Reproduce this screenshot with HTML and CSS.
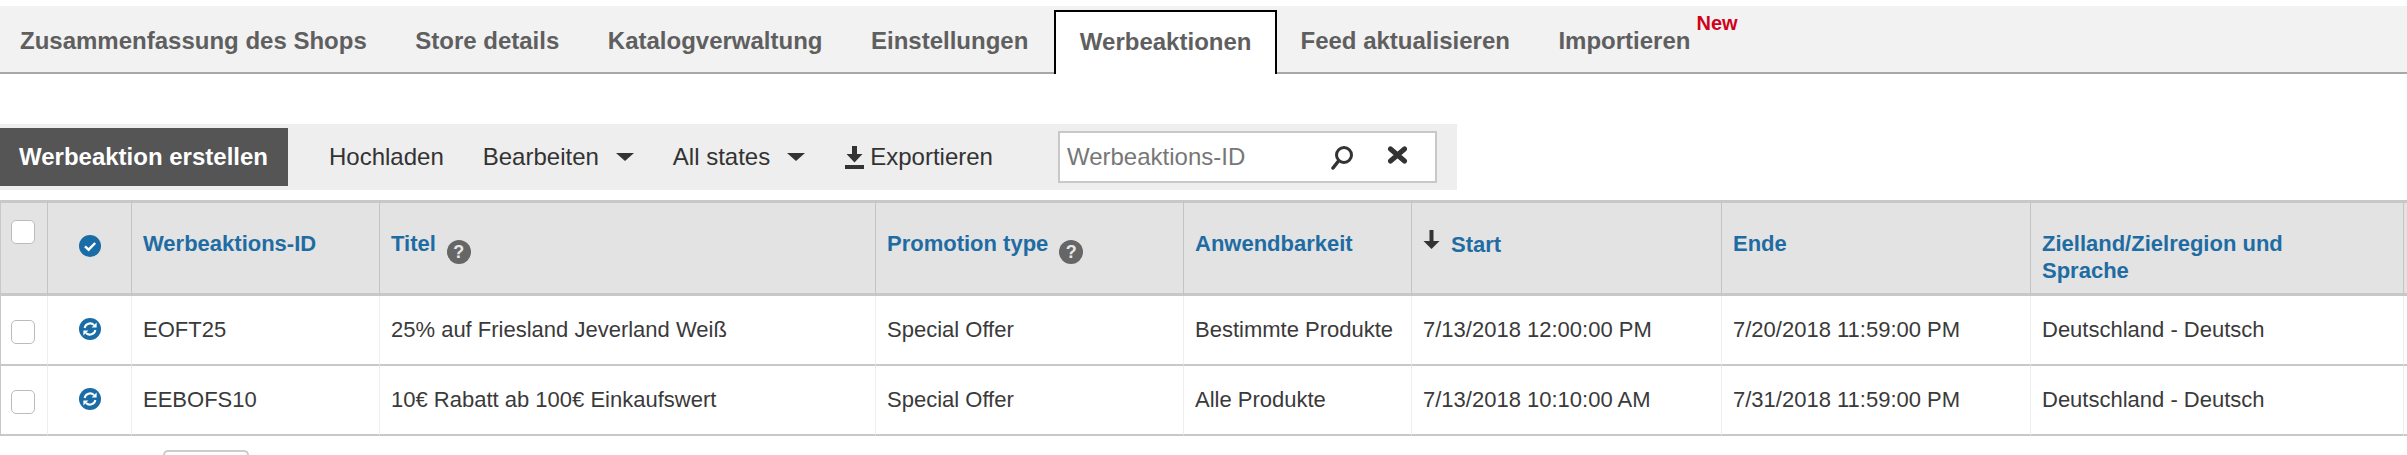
FILE: index.html
```html
<!DOCTYPE html>
<html lang="de">
<head>
<meta charset="utf-8">
<title>Werbeaktionen</title>
<link rel="stylesheet" href="styles.css">
</head>
<body>
<svg class="defs" width="0" height="0" aria-hidden="true">
  <symbol id="i-check" viewBox="0 0 22 22"><circle cx="11" cy="11" r="11" fill="#1a6ca6"/><path d="M6 11.300l3.600 3.400L16.200 8" fill="none" stroke="#fff" stroke-width="2.400"/></symbol>
  <symbol id="i-sync" viewBox="0 0 22 22"><circle cx="11" cy="11" r="11" fill="#1a6ca6"/><path d="M5.600 10a5.600 5.600 0 0 1 9.400-3" fill="none" stroke="#fff" stroke-width="2"/><path d="M12.600 9.400h5V4.600z" fill="#fff"/><path d="M16.400 12a5.600 5.600 0 0 1-9.400 3" fill="none" stroke="#fff" stroke-width="2"/><path d="M9.400 12.600h-5v4.800z" fill="#fff"/></symbol>
</svg>

<nav class="tabs">
  <a class="tab">Zusammenfassung des Shops</a>
  <a class="tab">Store details</a>
  <a class="tab">Katalogverwaltung</a>
  <a class="tab">Einstellungen</a>
  <a class="tab tab-active">Werbeaktionen</a>
  <a class="tab">Feed aktualisieren</a>
  <a class="tab tab-new">Importieren<sup class="new">New</sup></a>
</nav>

<div class="toolbar">
  <button class="create">Werbeaktion erstellen</button>
  <span class="tool">Hochladen</span>
  <span class="tool tool-edit">Bearbeiten<svg class="caret" viewBox="0 0 18 8"><path d="M0 0h18L9 8z"/></svg></span>
  <span class="tool tool-states">All states<svg class="caret" viewBox="0 0 18 8"><path d="M0 0h18L9 8z"/></svg></span>
  <span class="tool tool-export"><svg class="export-icon" viewBox="0 0 19 23"><path d="M7 0h5v8h5.500L9.500 16.500 1.500 8H7z" fill="#333"/><path d="M0 19h19v4H0z" fill="#333"/></svg>Exportieren</span>
  <div class="search">
    <span class="placeholder">Werbeaktions-ID</span>
    <svg class="search-icon" viewBox="0 0 24 24"><circle cx="14" cy="9" r="7.500" fill="none" stroke="#333" stroke-width="3"/><path d="M8.500 15L3 22" stroke="#333" stroke-width="3.500" stroke-linecap="round"/></svg>
    <svg class="clear-icon" viewBox="0 0 21 18"><path d="M3.500 3l14 12M17.500 3l-14 12" stroke="#333" stroke-width="5" stroke-linecap="round"/></svg>
  </div>
</div>

<table class="grid">
  <colgroup>
    <col class="c-check"><col class="c-state"><col class="c-id"><col class="c-title"><col class="c-type"><col class="c-scope"><col class="c-start"><col class="c-end"><col class="c-region"><col class="c-rest">
  </colgroup>
  <thead>
    <tr>
      <th class="cell-check"><span class="box box-head"></span></th>
      <th class="cell-state"><svg class="state"><use href="#i-check"/></svg></th>
      <th>Werbeaktions-ID</th>
      <th>Titel<span class="help">?</span></th>
      <th>Promotion type<span class="help">?</span></th>
      <th>Anwendbarkeit</th>
      <th><svg class="sort" viewBox="0 0 17 19"><path d="M6.500 0h4v11h6L8.500 19 .5 11h6z" fill="#333"/></svg>Start</th>
      <th>Ende</th>
      <th class="th-region">Zielland/Zielregion und Sprache</th>
      <th></th>
    </tr>
  </thead>
  <tbody>
    <tr>
      <td class="cell-check"><span class="box"></span></td>
      <td class="cell-state"><svg class="state"><use href="#i-sync"/></svg></td>
      <td>EOFT25</td>
      <td>25% auf Friesland Jeverland Weiß</td>
      <td>Special Offer</td>
      <td>Bestimmte Produkte</td>
      <td>7/13/2018 12:00:00 PM</td>
      <td>7/20/2018 11:59:00 PM</td>
      <td>Deutschland - Deutsch</td>
      <td></td>
    </tr>
    <tr>
      <td class="cell-check"><span class="box"></span></td>
      <td class="cell-state"><svg class="state"><use href="#i-sync"/></svg></td>
      <td>EEBOFS10</td>
      <td>10€ Rabatt ab 100€ Einkaufswert</td>
      <td>Special Offer</td>
      <td>Alle Produkte</td>
      <td>7/13/2018 10:10:00 AM</td>
      <td>7/31/2018 11:59:00 PM</td>
      <td>Deutschland - Deutsch</td>
      <td></td>
    </tr>
  </tbody>
</table>

<div class="pager"></div>
</body>
</html>
```

FILE: styles.css
```css
html, body {
  margin: 0;
  height: 455px;
  overflow: hidden;
  background: #fff;
}
body {
  padding-top: 6px;
  box-sizing: border-box;
  font-family: "Liberation Sans", Arial, sans-serif;
  color: #333;
}
.defs { position: absolute; }

/* tabs */
.tabs {
  display: flex;
  height: 66px;
  background: #f2f2f2;
  border-bottom: 2px solid #a8a8a8;
  padding-left: 20px;
}
.tab {
  font-size: 24px;
  font-weight: 700;
  color: #5f5f5f;
  margin-right: 48.5px;
  line-height: 70px;
  white-space: nowrap;
}
.tab-active {
  box-sizing: border-box;
  margin: 4px 23px -2px -23px;
  padding: 0 24px;
  height: 64px;
  line-height: 60px;
  background: #fff;
  border: 2px solid #000;
  border-bottom: 0;
}
.tab-new { position: relative; }
.new {
  position: absolute;
  left: 100%;
  top: 6px;
  margin-left: 6px;
  font-size: 20px;
  line-height: 22px;
  color: #d0021b;
}

/* toolbar */
.toolbar {
  display: flex;
  align-items: center;
  box-sizing: border-box;
  width: 1457px;
  height: 66px;
  margin-top: 50px;
  background: #eee;
  font-size: 24px;
}
.create {
  width: 288px;
  height: 58px;
  margin: 0;
  padding: 0 0 0 19px;
  border: 0;
  text-align: left;
  background: #555;
  color: #fff;
  font: 700 24px "Liberation Sans", Arial, sans-serif;
}
.tool {
  display: flex;
  align-items: center;
  margin-left: 41px;
  white-space: nowrap;
}
.tool-edit { margin-left: 39px; }
.tool-states { margin-left: 39px; }
.tool-export { margin-left: 40px; }
.caret {
  width: 18px;
  height: 8px;
  margin-left: 17px;
  fill: #333;
}
.export-icon {
  width: 19px;
  height: 23px;
  margin-right: 6px;
}
.search {
  display: flex;
  align-items: center;
  box-sizing: border-box;
  width: 379px;
  height: 52px;
  margin-left: 65px;
  padding-left: 7px;
  background: #fff;
  border: 2px solid #c8c8c8;
}
.placeholder {
  width: 263px;
  color: #777;
}
.search-icon {
  width: 24px;
  height: 24px;
  margin-top: 2px;
}
.clear-icon {
  width: 21px;
  height: 18px;
  margin-left: 33px;
  margin-top: -4px;
}

/* table */
.grid {
  width: 2407px;
  margin-top: 10px;
  table-layout: fixed;
  border-collapse: separate;
  border-spacing: 0;
  font-size: 22px;
}
.c-check { width: 48px; }
.c-state { width: 84px; }
.c-id { width: 248px; }
.c-title { width: 496px; }
.c-type { width: 308px; }
.c-scope { width: 228px; }
.c-start { width: 310px; }
.c-end { width: 309px; }
.c-region { width: 373px; }
.c-rest { width: 3px; }

th, td {
  box-sizing: border-box;
  padding: 0 11px;
  text-align: left;
}
th {
  height: 96px;
  padding-top: 27px;
  vertical-align: top;
  line-height: 27px;
  font-weight: 700;
  color: #1f6ca3;
  background: #e3e3e3;
  border-top: 3px solid #c8c8c8;
  border-bottom: 3px solid #c8c8c8;
  border-right: 1.5px solid #c4c4c4;
}
th.th-region { padding-right: 100px; }
td {
  height: 70px;
  line-height: 26px;
  color: #3a3a3a;
  background: #fff;
  border-bottom: 2px solid #c8c8c8;
  border-right: 1.5px solid #eee;
  white-space: nowrap;
}
th:first-child, td:first-child {
  border-left: 1.5px solid #c8c8c8;
}
th:last-child, td:last-child {
  border-right: 0;
  padding: 0;
}
.cell-check { padding: 3px 0 0 10px; }
.cell-state { padding: 0 0 3px; text-align: center; }
th.cell-check { padding: 17px 0 0 10px; }
th.cell-state { padding: 32px 0 0; }
.box {
  display: block;
  box-sizing: border-box;
  width: 24px;
  height: 24px;
  background: #fff;
  border: 1.5px solid #bbb;
  border-radius: 5px;
}
.state {
  display: block;
  width: 22px;
  height: 22px;
  margin: 0 auto;
}
.help {
  display: inline-block;
  width: 24px;
  height: 24px;
  margin-left: 11px;
  border-radius: 50%;
  vertical-align: -7px;
  background: #666;
  color: #e8e8e8;
  font-size: 18px;
  line-height: 24px;
  text-align: center;
}
.sort {
  width: 17px;
  height: 19px;
  margin-right: 11px;
  vertical-align: 3px;
}

.pager {
  box-sizing: border-box;
  width: 86px;
  height: 5px;
  margin: 14px 0 0 163px;
  background: #fff;
  border: 2px solid #ccc;
  border-bottom: 0;
  border-radius: 8px 8px 0 0;
}
```
